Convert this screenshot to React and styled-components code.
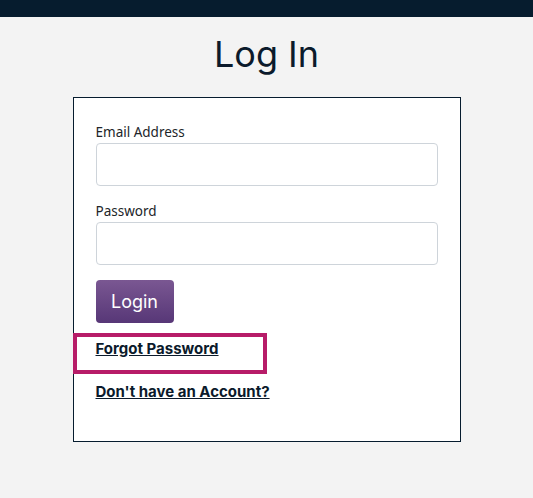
import styled, { createGlobalStyle } from 'styled-components';

const GlobalStyle = createGlobalStyle`
	body {
		margin: 0;
		background: #f3f3f3;
		font-family: 'Noto Sans', 'Open Sans', sans-serif;
	}
`;

export default function App() {
	return (
		<>
			<GlobalStyle />
			<TopBar />
			<Page>
				<Title>Log In</Title>
				<Card>
					<Field>
						<Label htmlFor='email'>Email Address</Label>
						<Input id='email' type='email' />
					</Field>
					<Field>
						<Label htmlFor='password'>Password</Label>
						<Input id='password' type='password' />
					</Field>
					<LoginButton type='button'>Login</LoginButton>
					<Links>
						<LinkWrap>
							<TextLink href='#'>Forgot Password</TextLink>
							<Highlight />
						</LinkWrap>
						<LinkWrap>
							<TextLink href='#'>Don't have an Account?</TextLink>
						</LinkWrap>
					</Links>
				</Card>
			</Page>
		</>
	);
}

const TopBar = styled.header`
	height: 17px;
	background: #061c2e;
`;

const Page = styled.main`
	display: flex;
	flex-direction: column;
	align-items: center;
`;

const Title = styled.h1`
	margin: 16px 0 21px;
	font-family: 'Inter', sans-serif;
	font-weight: 400;
	font-size: 36px;
	line-height: 43px;
	color: #0b1a2b;
`;

const Card = styled.section`
	box-sizing: border-box;
	width: 388px;
	padding: 24px 22px 39px;
	background: #fff;
	border: 1px solid #061c2e;
`;

const Field = styled.div`
	margin-bottom: 15px;
`;

const Label = styled.label`
	display: block;
	font-size: 13.5px;
	line-height: 21px;
	color: #212529;
`;

const Input = styled.input`
	box-sizing: border-box;
	display: block;
	width: 100%;
	height: 43px;
	border: 1px solid #ced4da;
	border-radius: 4px;
	background: #fff;
`;

const LoginButton = styled.button`
	width: 78px;
	height: 43px;
	border: none;
	border-radius: 4px;
	background: linear-gradient(#7a5792, #573777);
	color: #fff;
	font-family: 'Inter', sans-serif;
	font-size: 18px;
	cursor: pointer;
`;

const Links = styled.div`
	display: grid;
	gap: 22px;
	margin-top: 15px;
`;

const LinkWrap = styled.div`
	position: relative;
	line-height: 21px;
`;

const TextLink = styled.a`
	font-family: 'Inter', sans-serif;
	font-weight: 700;
	font-size: 15px;
	color: #0b1a2b;
	text-decoration: underline;
`;

const Highlight = styled.span`
	position: absolute;
	left: -23px;
	top: -5px;
	width: 194px;
	height: 41px;
	box-sizing: border-box;
	border: 4px solid #b71c68;
	pointer-events: none;
`;
